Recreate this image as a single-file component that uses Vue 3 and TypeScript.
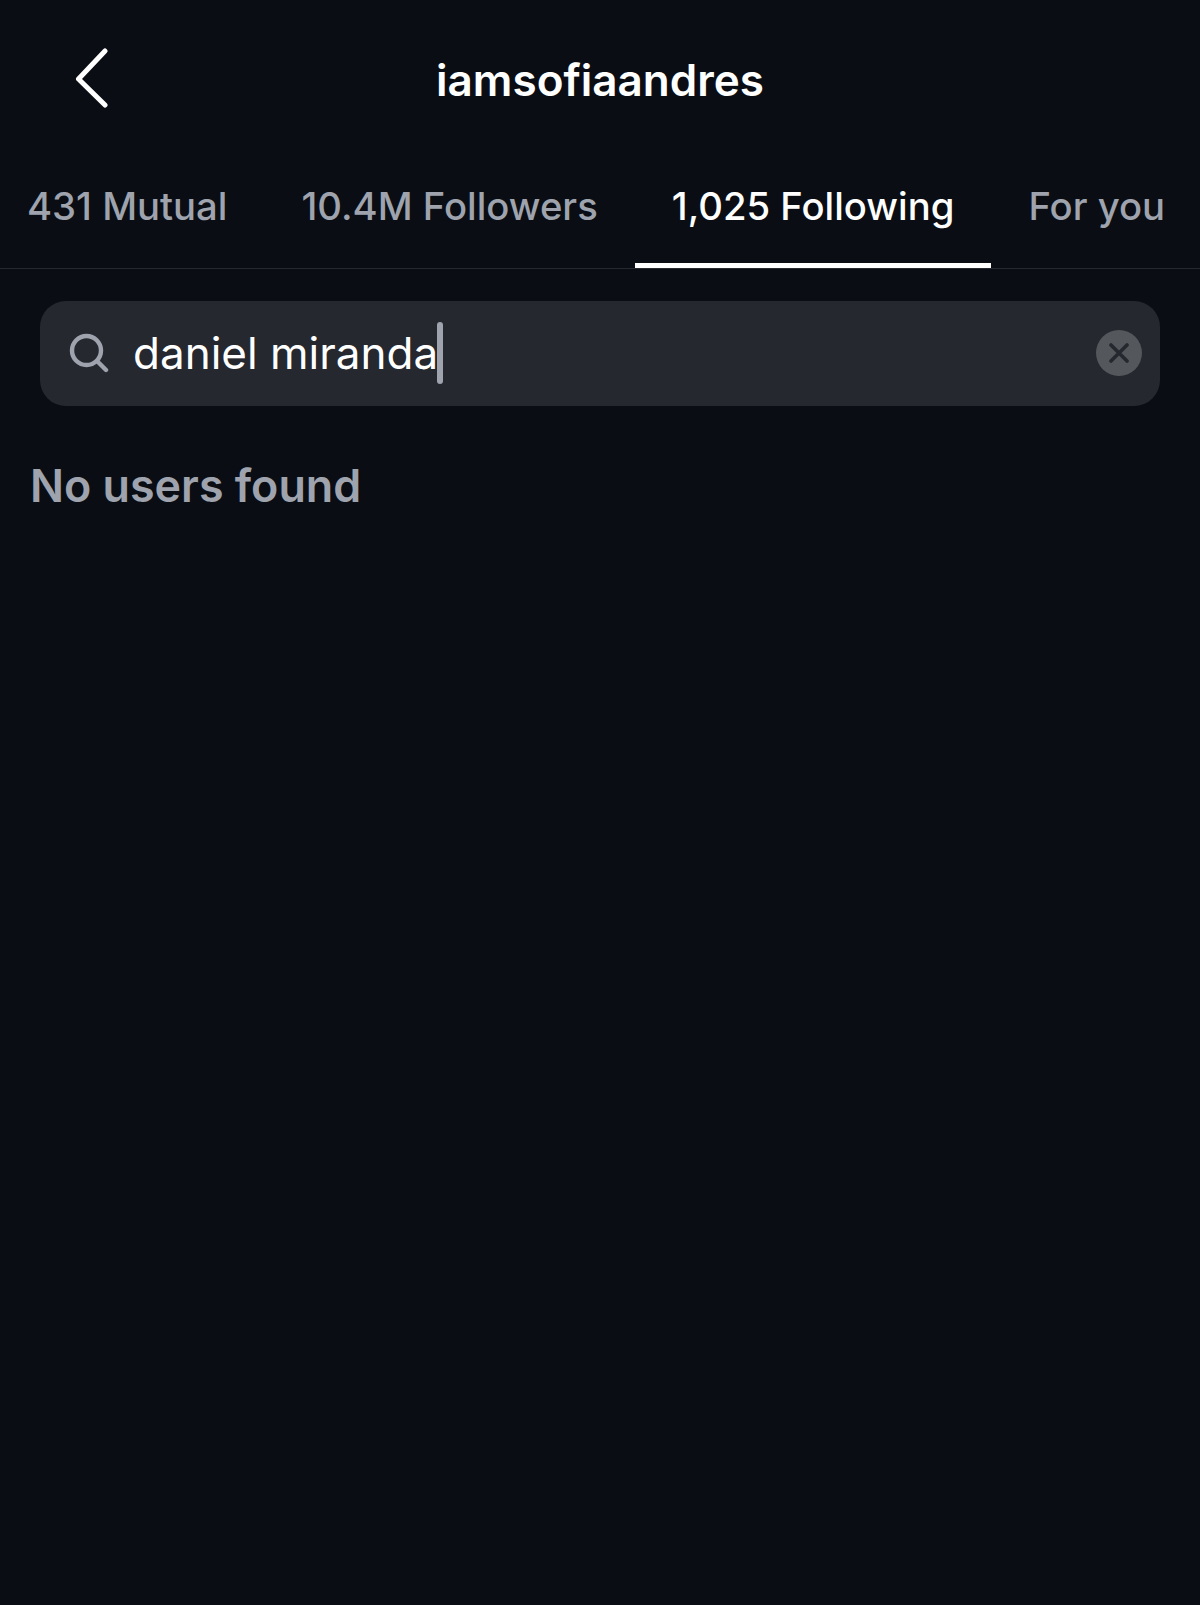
<script setup lang="ts">
const tabs = [
  { label: '431 Mutual', active: false },
  { label: '10.4M Followers', active: false },
  { label: '1,025 Following', active: true },
  { label: 'For you', active: false },
]
</script>

<template>
  <div class="page">
    <header class="top">
      <button class="back" aria-label="Back">
        <svg width="36" height="60" viewBox="0 0 36 60" fill="none">
          <path d="M31 3 L4.5 31 L31 57" stroke="#fff" stroke-width="5" stroke-linecap="round" stroke-linejoin="round" />
        </svg>
      </button>
      <h1 class="title">iamsofiaandres</h1>
    </header>

    <nav class="tabs">
      <div v-for="tab in tabs" :key="tab.label" :class="['tab', { active: tab.active }]">{{ tab.label }}</div>
    </nav>

    <div class="search">
      <svg class="lens" width="40" height="40" viewBox="0 0 40 40" fill="none">
        <circle cx="17.5" cy="17.5" r="14.5" stroke="#9ea3ad" stroke-width="4.4" />
        <path d="M28 28 L37 37" stroke="#9ea3ad" stroke-width="4.4" stroke-linecap="round" />
      </svg>
      <div class="query">daniel miranda<span class="caret"></span></div>
      <div class="clear">
        <svg width="20" height="20" viewBox="0 0 20 20" fill="none">
          <path d="M2 2 L18 18 M18 2 L2 18" stroke="#25282f" stroke-width="3.6" stroke-linecap="round" />
        </svg>
      </div>
    </div>

    <p class="empty">No users found</p>
  </div>
</template>

<style scoped>
.page {
  height: 1605px;
  background: #0a0e14;
  font-family: Inter, "Liberation Sans", sans-serif;
  overflow: hidden;
}
.top {
  height: 160px;
  display: flex;
  align-items: center;
  justify-content: center;
  position: relative;
}
.back {
  position: absolute;
  left: 74px;
  top: 48px;
  padding: 0;
  border: 0;
  background: none;
  display: block;
}
.back svg { display: block; }
.title {
  margin: 0;
  font-size: 44px;
  font-weight: 600;
  color: #fff;
}
.tabs {
  display: flex;
  height: 108px;
  margin-left: -10px;
  box-shadow: 0 1px 0 #25282e;
  width: 1210px;
}
.tab {
  padding: 0 37px;
  height: 108px;
  box-sizing: border-box;
  line-height: 92px;
  font-size: 38.25px;
  font-weight: 500;
  color: #9ea3ad;
  white-space: nowrap;
}
.tab.active {
  color: #fff;
  border-bottom: 5px solid #fff;
}
.search {
  margin: 33px 40px 0;
  height: 105px;
  box-sizing: border-box;
  border-radius: 26px;
  background: #25282f;
  display: flex;
  align-items: center;
  padding: 0 18px 1px 29px;
}
.lens { flex: none; }
.query {
  margin-left: 24px;
  flex: 1;
  font-size: 44px;
  font-weight: 400;
  color: #fff;
  display: flex;
  align-items: center;
}
.caret {
  width: 6px;
  height: 62px;
  margin-left: -1px;
  border-radius: 3px;
  background: #9ea3ad;
}
.clear {
  width: 46px;
  height: 46px;
  border-radius: 50%;
  background: #54575c;
  display: flex;
  align-items: center;
  justify-content: center;
}
.empty {
  margin: 53px 0 0 30px;
  font-size: 44.8px;
  font-weight: 600;
  color: #9ea3ad;
}
</style>

<style>
body { background: #0a0e14; }
</style>
